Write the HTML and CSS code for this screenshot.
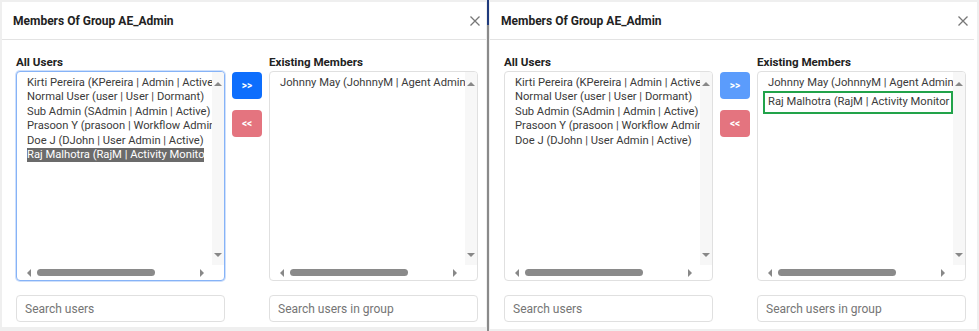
FILE: index.html
```html
<!DOCTYPE html>
<html lang="en">
<head>
    <meta charset="UTF-8">
    <meta name="viewport" content="width=device-width, initial-scale=1.0">
    <title>Members Of Group AE_Admin</title>
    <link rel="stylesheet" href="styles.css">
</head>
<body>
    <div class="screens">
        <!-- Before: user selected in All Users -->
        <div class="panel">
            <div class="panel-header">
                <h2 class="panel-title">Members Of Group AE_Admin</h2>
                <svg class="close" width="10" height="10" viewBox="0 0 10 10"><path d="M0.5 0.5 L9.5 9.5 M9.5 0.5 L0.5 9.5"/></svg>
            </div>
            <div class="panel-body">
                <div class="list-label">All Users</div>
                <div></div>
                <div class="list-label">Existing Members</div>

                <div class="listbox focused">
                    <div class="list-view">
                        <div class="option">Kirti Pereira (KPereira | Admin | Active)</div>
                        <div class="option">Normal User (user | User | Dormant)</div>
                        <div class="option">Sub Admin (SAdmin | Admin | Active)</div>
                        <div class="option">Prasoon Y (prasoon | Workflow Admin | Active)</div>
                        <div class="option">Doe J (DJohn | User Admin | Active)</div>
                        <div class="option selected">Raj Malhotra (RajM | Activity Monitor | Active)</div>
                    </div>
                    <div class="vscroll"><span class="arrow up"></span><span class="arrow down"></span></div>
                    <div class="hscroll"><span class="arrow left"></span><span class="thumb"></span><span class="arrow right"></span></div>
                    <div class="corner"></div>
                </div>
                <div class="move-buttons">
                    <button class="btn btn-add">&gt;&gt;</button>
                    <button class="btn btn-remove">&lt;&lt;</button>
                </div>
                <div class="listbox">
                    <div class="list-view">
                        <div class="option">Johnny May (JohnnyM | Agent Admin | Active)</div>
                    </div>
                    <div class="vscroll"><span class="arrow up"></span><span class="arrow down"></span></div>
                    <div class="hscroll"><span class="arrow left"></span><span class="thumb"></span><span class="arrow right"></span></div>
                    <div class="corner"></div>
                </div>

                <input class="search" type="text" placeholder="Search users">
                <div></div>
                <input class="search" type="text" placeholder="Search users in group">
            </div>
        </div>

        <div class="divider"></div>

        <!-- After: user moved to Existing Members -->
        <div class="panel panel-wide">
            <div class="panel-header">
                <h2 class="panel-title">Members Of Group AE_Admin</h2>
                <svg class="close" width="10" height="10" viewBox="0 0 10 10"><path d="M0.5 0.5 L9.5 9.5 M9.5 0.5 L0.5 9.5"/></svg>
            </div>
            <div class="panel-body">
                <div class="list-label">All Users</div>
                <div></div>
                <div class="list-label">Existing Members</div>

                <div class="listbox">
                    <div class="list-view">
                        <div class="option">Kirti Pereira (KPereira | Admin | Active)</div>
                        <div class="option">Normal User (user | User | Dormant)</div>
                        <div class="option">Sub Admin (SAdmin | Admin | Active)</div>
                        <div class="option">Prasoon Y (prasoon | Workflow Admin | Active)</div>
                        <div class="option">Doe J (DJohn | User Admin | Active)</div>
                    </div>
                    <div class="vscroll"><span class="arrow up"></span><span class="arrow down"></span></div>
                    <div class="hscroll"><span class="arrow left"></span><span class="thumb"></span><span class="arrow right"></span></div>
                    <div class="corner"></div>
                </div>
                <div class="move-buttons">
                    <button class="btn btn-add disabled">&gt;&gt;</button>
                    <button class="btn btn-remove">&lt;&lt;</button>
                </div>
                <div class="listbox">
                    <div class="list-view">
                        <div class="option">Johnny May (JohnnyM | Agent Admin | Active)</div>
                        <div class="option added">Raj Malhotra (RajM | Activity Monitor | Active)</div>
                    </div>
                    <div class="vscroll"><span class="arrow up"></span><span class="arrow down"></span></div>
                    <div class="hscroll"><span class="arrow left"></span><span class="thumb"></span><span class="arrow right"></span></div>
                    <div class="corner"></div>
                </div>

                <input class="search" type="text" placeholder="Search users">
                <div></div>
                <input class="search" type="text" placeholder="Search users in group">
            </div>
        </div>
    </div>
</body>
</html>
```

FILE: styles.css
```css
* {
    margin: 0;
    padding: 0;
    box-sizing: border-box;
}

body {
    background: #efefef;
    color: #333;
    font-family: Roboto, 'Liberation Sans', sans-serif;
    font-size: 12px;
}

.screens {
    display: flex;
    height: 331px;
}

.panel {
    width: 484px;
    margin: 2px 1px 4px 2px;
    background: #fff;
    display: flex;
    flex-direction: column;
}

.panel-wide {
    width: 487px;
    margin: 2px 2px 2px 1px;
    padding-right: 3px;
}

/* Screenshot separator */
.divider {
    width: 2px;
    background: linear-gradient(#1f3a7d 0, #1f3a7d 25px, #8a8a8a 25px);
}

.panel-header {
    height: 38px;
    border-bottom: 1px solid #e3e3e3;
    display: flex;
    align-items: center;
    padding: 0 6px 0 11px;
}

.panel-title {
    flex: 1;
    font-size: 12px;
    font-weight: 700;
    color: #222;
}

.close {
    stroke: #777;
    stroke-width: 1.3;
}

.panel-body {
    display: grid;
    grid-template-columns: 209px 30px 209px;
    column-gap: 7px;
    padding: 14px 0 0 14px;
}

.list-label {
    font-size: 11.6px;
    font-weight: 700;
    color: #222;
    line-height: 16px;
    margin-bottom: 1px;
}

.listbox {
    height: 210px;
    border: 1px solid #e0e0e0;
    border-radius: 4px;
    display: grid;
    grid-template-columns: 1fr 12px;
    grid-template-rows: 1fr 15px;
    overflow: hidden;
    background: #fff;
}

.listbox.focused {
    border-color: #86b3f7;
    box-shadow: 0 0 0 1px #cfe0fb;
}

.list-view {
    padding: 4px 0 0 10px;
    overflow: hidden;
    white-space: nowrap;
    color: #3b3b3b;
    font-size: 11.2px;
    line-height: 14.4px;
}

.option.selected {
    display: inline-block;
    max-width: 177px;
    overflow: hidden;
    background: #6b6b6b;
    color: #fff;
    vertical-align: top;
}

.option.added {
    margin: 1px 0 0 -5px;
    padding: 2px 0 2px 3px;
    border: 2px solid #22a34a;
    overflow: hidden;
}

.vscroll {
    background: #f7f7f7;
    display: flex;
    flex-direction: column;
    justify-content: space-between;
    align-items: center;
    padding: 10px 0 8px;
}

.hscroll {
    display: flex;
    align-items: center;
    padding-left: 10px;
}

.arrow {
    width: 0;
    height: 0;
    border: 4px solid transparent;
}

.arrow.up {
    border-top-width: 0;
    border-bottom: 4px solid #888;
}

.arrow.down {
    border-bottom-width: 0;
    border-top: 4px solid #888;
}

.arrow.left {
    border-left-width: 0;
    border-right: 4px solid #888;
}

.arrow.right {
    border-right-width: 0;
    border-left: 4px solid #888;
}

.thumb {
    width: 118px;
    height: 7px;
    border-radius: 4px;
    background: #8a8a8a;
    margin: 0 45px 0 6px;
}

.move-buttons {
    display: flex;
    flex-direction: column;
    gap: 11px;
    padding-top: 1px;
}

.btn {
    height: 27px;
    border: none;
    border-radius: 4px;
    color: #fff;
    font-family: inherit;
    font-size: 10px;
    font-weight: 700;
}

.btn-add {
    background: #0d6efd;
}

.btn-add.disabled {
    background: #5b9cfc;
}

.btn-remove {
    background: #e4747f;
}

.search {
    margin-top: 14px;
    height: 27px;
    border: 1px solid #e0e0e0;
    border-radius: 4px;
    padding: 0 8px;
    font-family: inherit;
    font-size: 12px;
    color: #333;
}

.search::placeholder {
    color: #757575;
}
```
